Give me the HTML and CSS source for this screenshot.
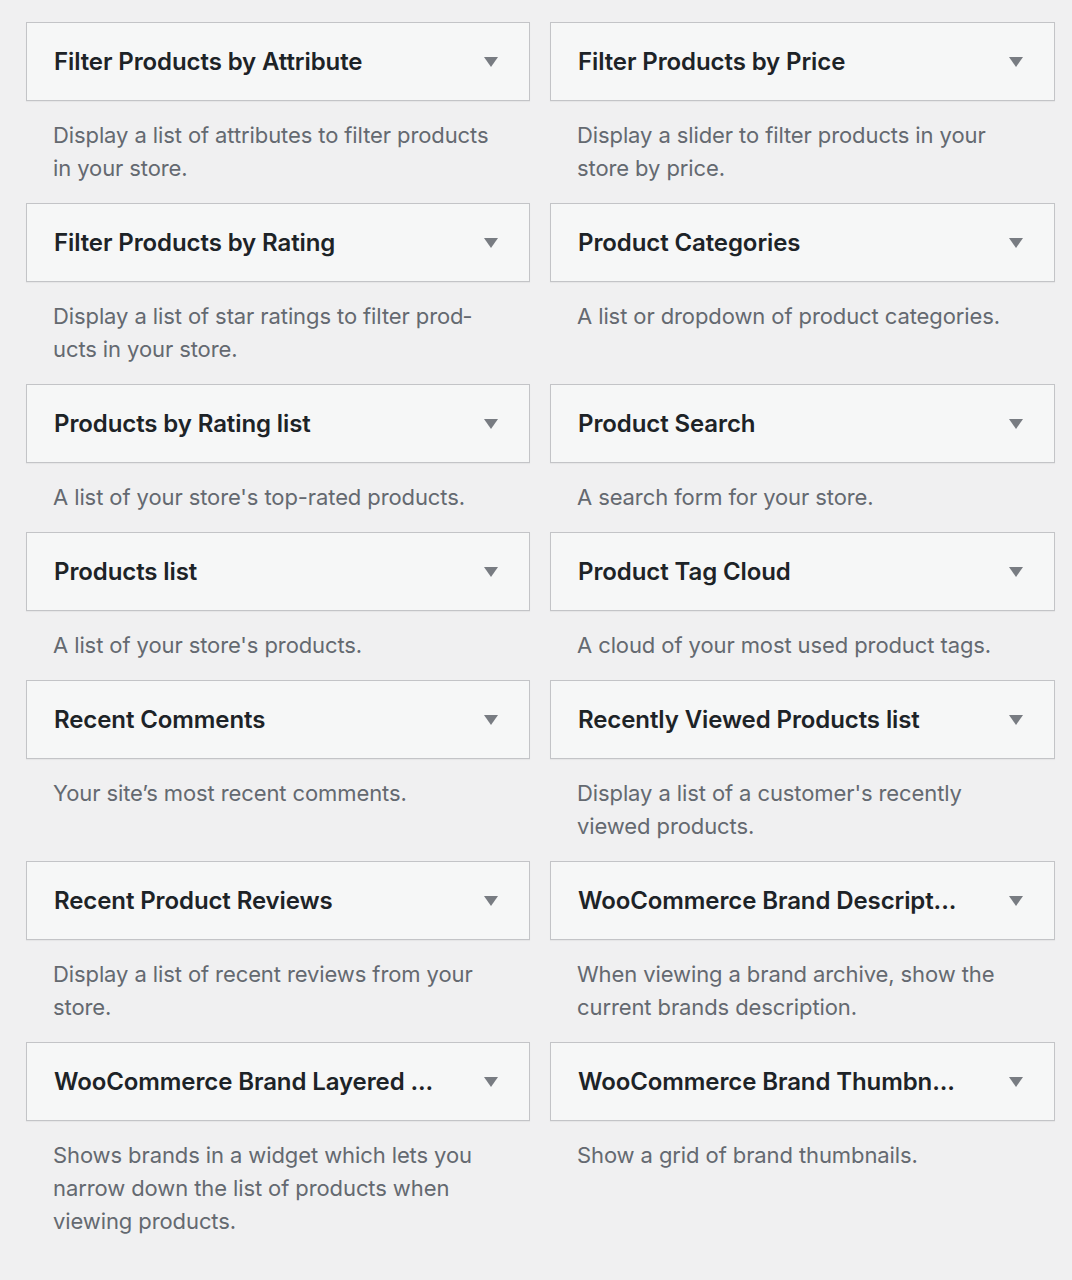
FILE: index.html
```html
<!DOCTYPE html>
<html lang="en">
<head>
    <meta charset="UTF-8">
    <meta name="viewport" content="width=device-width, initial-scale=1.0">
    <title>Available Widgets</title>
    <link rel="stylesheet" href="styles.css">
</head>
<body>
    <div class="widget-list">
        <div class="widget">
            <div class="widget-top">
                <h3 class="widget-title">Filter Products by Attribute</h3>
                <span class="widget-arrow"></span>
            </div>
            <p class="widget-description">Display a list of attributes to filter products in your store.</p>
        </div>
        <div class="widget">
            <div class="widget-top">
                <h3 class="widget-title">Filter Products by Price</h3>
                <span class="widget-arrow"></span>
            </div>
            <p class="widget-description">Display a slider to filter products in your store by price.</p>
        </div>
        <div class="widget">
            <div class="widget-top">
                <h3 class="widget-title">Filter Products by Rating</h3>
                <span class="widget-arrow"></span>
            </div>
            <p class="widget-description">Display a list of star ratings to filter prod&shy;ucts in your store.</p>
        </div>
        <div class="widget">
            <div class="widget-top">
                <h3 class="widget-title">Product Categories</h3>
                <span class="widget-arrow"></span>
            </div>
            <p class="widget-description">A list or dropdown of product categories.</p>
        </div>
        <div class="widget">
            <div class="widget-top">
                <h3 class="widget-title">Products by Rating list</h3>
                <span class="widget-arrow"></span>
            </div>
            <p class="widget-description">A list of your store's top-rated products.</p>
        </div>
        <div class="widget">
            <div class="widget-top">
                <h3 class="widget-title">Product Search</h3>
                <span class="widget-arrow"></span>
            </div>
            <p class="widget-description">A search form for your store.</p>
        </div>
        <div class="widget">
            <div class="widget-top">
                <h3 class="widget-title">Products list</h3>
                <span class="widget-arrow"></span>
            </div>
            <p class="widget-description">A list of your store's products.</p>
        </div>
        <div class="widget">
            <div class="widget-top">
                <h3 class="widget-title">Product Tag Cloud</h3>
                <span class="widget-arrow"></span>
            </div>
            <p class="widget-description">A cloud of your most used product tags.</p>
        </div>
        <div class="widget">
            <div class="widget-top">
                <h3 class="widget-title">Recent Comments</h3>
                <span class="widget-arrow"></span>
            </div>
            <p class="widget-description">Your site&rsquo;s most recent comments.</p>
        </div>
        <div class="widget">
            <div class="widget-top">
                <h3 class="widget-title">Recently Viewed Products list</h3>
                <span class="widget-arrow"></span>
            </div>
            <p class="widget-description">Display a list of a customer's recently viewed products.</p>
        </div>
        <div class="widget">
            <div class="widget-top">
                <h3 class="widget-title">Recent Product Reviews</h3>
                <span class="widget-arrow"></span>
            </div>
            <p class="widget-description">Display a list of recent reviews from your store.</p>
        </div>
        <div class="widget">
            <div class="widget-top">
                <h3 class="widget-title">WooCommerce Brand Descript...</h3>
                <span class="widget-arrow"></span>
            </div>
            <p class="widget-description">When viewing a brand archive, show the current brands description.</p>
        </div>
        <div class="widget">
            <div class="widget-top">
                <h3 class="widget-title">WooCommerce Brand Layered ...</h3>
                <span class="widget-arrow"></span>
            </div>
            <p class="widget-description">Shows brands in a widget which lets you narrow down the list of products when viewing products.</p>
        </div>
        <div class="widget">
            <div class="widget-top">
                <h3 class="widget-title">WooCommerce Brand Thumbn...</h3>
                <span class="widget-arrow"></span>
            </div>
            <p class="widget-description">Show a grid of brand thumbnails.</p>
        </div>
    </div>
</body>
</html>
```

FILE: styles.css
```css
body {
    margin: 0;
    background-color: #f0f0f1;
    font-family: Inter, "Noto Sans", sans-serif;
    color: #1d2327;
}
.widget-list {
    display: grid;
    grid-template-columns: 504px 505px;
    column-gap: 20px;
    padding: 22px 0 0 26px;
}
.widget-top {
    display: flex;
    align-items: center;
    justify-content: space-between;
    background-color: #f6f7f7;
    border: 1px solid #c3c4c7;
    box-shadow: 0 1px 1px rgba(0, 0, 0, 0.04);
}
.widget-title {
    margin: 0;
    padding: 24px 27px;
    min-width: 0;
    font-size: 24px;
    line-height: 29px;
    font-weight: 600;
    letter-spacing: -0.1px;
    white-space: nowrap;
    overflow: hidden;
    text-overflow: ellipsis;
}
.widget-arrow {
    flex-shrink: 0;
    width: 0;
    height: 0;
    margin-right: 31px;
    border-left: 7px solid transparent;
    border-right: 7px solid transparent;
    border-top: 10px solid #787c82;
}
.widget-description {
    margin: 0;
    padding: 18px 27px 18px;
    font-size: 22px;
    line-height: 33px;
    letter-spacing: -0.1px;
    color: #646970;
}
```
